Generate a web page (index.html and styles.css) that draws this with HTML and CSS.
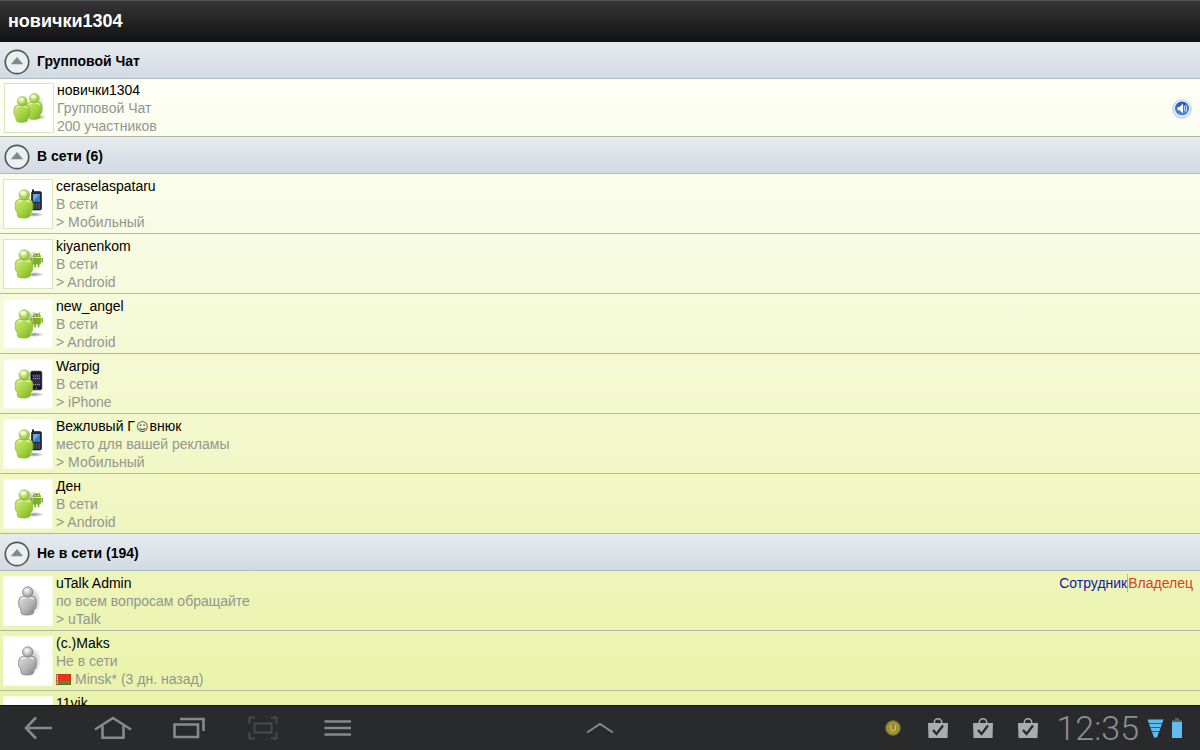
FILE: index.html
```html
<!DOCTYPE html>
<html lang="ru">
<head>
<meta charset="utf-8">
<title>новички1304</title>
<link rel="stylesheet" href="styles.css">
</head>
<body>
<svg class="defs" aria-hidden="true">
  <defs>
    <linearGradient id="green" x1="0" y1="0" x2="1" y2="1"><stop offset="0" stop-color="#d0ec7e"/><stop offset=".5" stop-color="#a9d545"/><stop offset="1" stop-color="#76ad1c"/></linearGradient>
    <radialGradient id="greenHead" cx=".4" cy=".35" r=".7"><stop offset="0" stop-color="#eafabf"/><stop offset=".5" stop-color="#b5dc5c"/><stop offset="1" stop-color="#7fb526"/></radialGradient>
    <linearGradient id="grey" x1="0" y1="0" x2="1" y2="1"><stop offset="0" stop-color="#dedede"/><stop offset=".55" stop-color="#b5b5b5"/><stop offset="1" stop-color="#7a7a7a"/></linearGradient>
    <radialGradient id="greyHead" cx=".4" cy=".35" r=".7"><stop offset="0" stop-color="#ffffff"/><stop offset=".5" stop-color="#c6c6c6"/><stop offset="1" stop-color="#858585"/></radialGradient>
    <radialGradient id="shade"><stop offset="0" stop-color="#000" stop-opacity=".45"/><stop offset="1" stop-color="#000" stop-opacity="0"/></radialGradient>
    <linearGradient id="blue" x1="0" y1="0" x2="0" y2="1"><stop offset="0" stop-color="#2a56b4"/><stop offset="1" stop-color="#4b8ae0"/></linearGradient>
  </defs>
  <symbol id="person" viewBox="0 0 18 28">
    <path d="M4.500 9.500Q1 10 .6 14L.7 19Q.9 20.500 2.300 20.700L3 25.500Q3.400 26.700 5 27Q9 27.800 13 26.800Q14.700 26.300 14.900 24.500L15.200 22Q17 21.500 17.200 19.500L17.400 15Q17.300 10.500 14.500 9.700Q9.500 8.400 4.500 9.500Z" fill="url(#green)" stroke="#86ba33" stroke-width=".7"/>
    <path d="M3 12Q9 9 15 12" fill="none" stroke="#e6f7b6" stroke-width="1.200"/>
    <circle cx="9.300" cy="5.500" r="5.100" fill="url(#greenHead)" stroke="#8fc03c" stroke-width=".5"/>
    <ellipse cx="8.300" cy="3.500" rx="2.900" ry="1.700" fill="#fff" opacity=".65"/>
  </symbol>
  <symbol id="person-off" viewBox="0 0 18 28">
    <path d="M4.500 9.500Q1 10 .6 14L.7 19Q.9 20.500 2.300 20.700L3 25.500Q3.400 26.700 5 27Q9 27.800 13 26.800Q14.700 26.300 14.900 24.500L15.200 22Q17 21.500 17.200 19.500L17.400 15Q17.300 10.500 14.500 9.700Q9.500 8.400 4.500 9.500Z" fill="url(#grey)" stroke="#8b8b8b" stroke-width=".8"/>
    <path d="M3 12Q9 9 15 12" fill="none" stroke="#f4f4f4" stroke-width="1.200"/>
    <circle cx="9.300" cy="5.500" r="5" fill="url(#greyHead)" stroke="#8b8b8b" stroke-width=".8"/>
  </symbol>
  <symbol id="contact-mobile" viewBox="0 0 48 48">
    <ellipse cx="30" cy="34.500" rx="10" ry="2.500" fill="url(#shade)"/>
    <rect x="28" y="9.500" width="2" height="5" fill="#222"/>
    <rect x="27.500" y="11.500" width="10" height="18.500" rx="1.600" fill="#252a31" stroke="#111" stroke-width=".6"/>
    <rect x="29" y="14" width="7" height="7.500" fill="#6ba8e8"/><path d="M29 21.500L36 14V21.500Z" fill="#3e79c4"/>
    <path d="M29 24H36M29 26H36M29 28H36" stroke="#8491a0" stroke-width=".8" stroke-dasharray="1.600 1"/>
    <use href="#person" x="10.500" y="9" width="19" height="30"/>
  </symbol>
  <symbol id="contact-android" viewBox="0 0 48 48">
    <ellipse cx="30" cy="34.500" rx="10" ry="2.500" fill="url(#shade)"/><ellipse cx="27" cy="19" rx="5" ry="9" fill="url(#shade)" opacity=".6"/>
    <g fill="#80ad2b"><path d="M28.700 17A4.100 3.700 0 0 1 36.900 17ZM28.700 17.700H36.900V23.600Q36.900 24.500 36 24.500H29.600Q28.700 24.500 28.700 23.600Z"/><rect x="26.700" y="17.600" width="1.500" height="5.200" rx=".7"/><rect x="37.400" y="17.600" width="1.500" height="5.200" rx=".7"/><rect x="30.200" y="24" width="1.700" height="3.500" rx=".7"/><rect x="33.700" y="24" width="1.700" height="3.500" rx=".7"/></g>
    <path d="M30.500 14L29.500 12M35.100 14L36.100 12" stroke="#80ad2b" stroke-width=".7"/><circle cx="31.200" cy="15.500" r=".5" fill="#fff"/><circle cx="34.500" cy="15.500" r=".5" fill="#fff"/>
    <use href="#person" x="10.500" y="9" width="19" height="30"/>
  </symbol>
  <symbol id="contact-iphone" viewBox="0 0 48 48">
    <ellipse cx="30" cy="34.500" rx="10" ry="2.500" fill="url(#shade)"/>
    <rect x="26.500" y="11" width="11.500" height="19" rx="1.800" fill="#15151a" stroke="#777" stroke-width=".7"/>
    <rect x="28.200" y="14" width="8.200" height="12.500" fill="#322e48"/>
    <path d="M29 16H36M29 18.500H36M29 24.500H36" stroke="#9a98bd" stroke-width="1" stroke-dasharray="1.200 .8"/><circle cx="32.300" cy="28.300" r=".9" fill="#777"/>
    <use href="#person" x="10.500" y="9" width="19" height="30"/>
  </symbol>
  <symbol id="contact-group" viewBox="0 0 48 48">
    <ellipse cx="32" cy="33" rx="9" ry="3" fill="url(#shade)"/><ellipse cx="34" cy="22" rx="6" ry="11" fill="url(#shade)" opacity=".5"/>
    <use href="#person" x="20" y="9" width="18" height="27"/>
    <use href="#person" x="8" y="12" width="18" height="27"/>
  </symbol>
  <symbol id="contact-off" viewBox="0 0 48 48">
    <ellipse cx="30" cy="24" rx="7" ry="13" fill="url(#shade)" opacity=".7"/>
    <use href="#person-off" x="14" y="9" width="19" height="30"/>
  </symbol>
  <symbol id="collapse" viewBox="0 0 26 26">
    <circle cx="13" cy="13" r="11.700" fill="#edf0f3" stroke="#55595d" stroke-width="1.700"/>
    <path d="M13 8L19.200 15.300H6.800Z" fill="#85898c"/>
  </symbol>
  <symbol id="bag" viewBox="0 0 20 20">
    <path d="M6.300 5V4.500A3.700 3.700 0 0 1 13.700 4.500V5" fill="none" stroke="#a9abad" stroke-width="1.500"/>
    <path d="M0 5H20L19.500 20H.5Z" fill="#a9abad"/>
    <path d="M5 12L8.500 16L15 7.500" fill="none" stroke="#292a2c" stroke-width="2.300"/>
  </symbol>
</svg>

<header class="titlebar"><h1 class="title">новички1304</h1></header>

<main class="roster">
  <section>
    <h2 class="group"><button class="group-toggle" type="button"><svg class="toggle-icon"><use href="#collapse"/></svg>Групповой Чат</button></h2>
    <ul class="contacts">
      <li class="contact contact-room">
        <svg class="avatar avatar-framed"><use href="#contact-group"/></svg>
        <div class="info"><span class="name">новички1304</span><span>Групповой Чат</span><span>200 участников</span></div>
        <button class="sound" type="button" aria-label="Звук">
          <svg viewBox="0 0 20 20"><circle cx="10" cy="10" r="9.300" fill="#d3dde3" stroke="#bdcbd0" stroke-width=".8"/><circle cx="10" cy="9.500" r="8" fill="#f0f6fb"/><circle cx="10" cy="9.500" r="7" fill="url(#blue)"/><path d="M5.500 8H7.500L11 4.800V14.200L7.500 11.200H5.500Z" fill="#fff"/><path d="M12.200 7Q13.500 9.500 12.200 12M13.800 5.800Q15.700 9.500 13.800 13.200" fill="none" stroke="#dceaff" stroke-width="1"/></svg>
        </button>
      </li>
    </ul>
  </section>
  <section>
    <h2 class="group"><button class="group-toggle" type="button"><svg class="toggle-icon"><use href="#collapse"/></svg>В сети (6)</button></h2>
    <ul class="contacts">
      <li class="contact"><svg class="avatar avatar-framed"><use href="#contact-mobile"/></svg><div class="info"><span class="name">ceraselaspataru</span><span>В сети</span><span>&gt; Мобильный</span></div></li>
      <li class="contact"><svg class="avatar avatar-framed"><use href="#contact-android"/></svg><div class="info"><span class="name">kiyanenkom</span><span>В сети</span><span>&gt; Android</span></div></li>
      <li class="contact"><svg class="avatar"><use href="#contact-android"/></svg><div class="info"><span class="name">new_angel</span><span>В сети</span><span>&gt; Android</span></div></li>
      <li class="contact"><svg class="avatar"><use href="#contact-iphone"/></svg><div class="info"><span class="name">Warpig</span><span>В сети</span><span>&gt; iPhone</span></div></li>
      <li class="contact"><svg class="avatar"><use href="#contact-mobile"/></svg><div class="info"><span class="name">Вежлυвый Г<span class="smile">☺</span>внюк</span><span>место для вашей рекламы</span><span>&gt; Мобильный</span></div></li>
      <li class="contact"><svg class="avatar"><use href="#contact-android"/></svg><div class="info"><span class="name">Ден</span><span>В сети</span><span>&gt; Android</span></div></li>
    </ul>
  </section>
  <section>
    <h2 class="group"><button class="group-toggle" type="button"><svg class="toggle-icon"><use href="#collapse"/></svg>Не в сети (194)</button></h2>
    <ul class="contacts">
      <li class="contact"><svg class="avatar"><use href="#contact-off"/></svg><div class="info"><span class="name">uTalk Admin</span><span>по всем вопросам обращайте</span><span>&gt; uTalk</span></div><div class="roles"><span class="role-staff">Сотрудник</span><span class="role-owner">Владелец</span></div></li>
      <li class="contact"><svg class="avatar"><use href="#contact-off"/></svg><div class="info"><span class="name">(c.)Maks</span><span>Не в сети</span><span class="place"><svg class="flag" viewBox="0 0 15 11"><rect width="15" height="11" fill="#f0321c"/><rect y="7" width="15" height="4" fill="#3c9a28"/><rect width="2" height="11" fill="#f7d5cc"/><path d="M1 0V11" stroke="#d23424" stroke-width="1.200" stroke-dasharray="1 1"/><rect x=".5" y=".5" width="14" height="10" fill="none" stroke="#8d3a22" stroke-opacity=".5"/></svg>Minsk* (3 дн. назад)</span></div></li>
      <li class="contact"><svg class="avatar"><use href="#contact-off"/></svg><div class="info"><span class="name">11vik</span></div></li>
    </ul>
  </section>
</main>

<footer class="systembar">
  <nav class="nav">
    <button class="nav-button" type="button" aria-label="Назад"><svg viewBox="0 0 40 30"><path d="M34 15H9M18 4.500L8 15L18 25.500" fill="none" stroke="#88898a" stroke-width="2.600"/></svg></button>
    <button class="nav-button" type="button" aria-label="Домой"><svg viewBox="0 0 40 30"><path d="M2 16.500L20 5L38 16.500M9.500 13V24.700H30.500V13" fill="none" stroke="#88898a" stroke-width="2.600"/></svg></button>
    <button class="nav-button" type="button" aria-label="Недавние"><svg viewBox="0 0 40 30"><path d="M6.500 11.500H30V24H6.500ZM12 6H35.500V18" fill="none" stroke="#88898a" stroke-width="2.600"/></svg></button>
    <button class="nav-button" type="button" aria-label="Снимок"><svg viewBox="0 0 40 30"><path d="M12 4.500H6.500V11M28 4.500H33.500V11M12 25.500H6.500V19M28 25.500H33.500V19M11.500 10.500H28.500V19.500H11.500Z" fill="none" stroke="#48494b" stroke-width="2"/></svg></button>
    <button class="nav-button" type="button" aria-label="Меню"><svg viewBox="0 0 40 30"><path d="M6.500 8.500H33M6.500 15H33M6.500 21.500H33" stroke="#88898a" stroke-width="2.600"/></svg></button>
  </nav>
  <button class="drawer" type="button" aria-label="Развернуть"><svg viewBox="0 0 28 12"><path d="M1 10.500L14 2L27 10.500" fill="none" stroke="#858687" stroke-width="2"/></svg></button>
  <div class="status">
    <svg class="coin" viewBox="0 0 16 16"><circle cx="8" cy="8" r="7.300" fill="#958626" stroke="#777034" stroke-width="1"/><circle cx="8" cy="8" r="5.300" fill="none" stroke="#b8ab4d" stroke-width=".8"/><path d="M5.800 4.800V8.500A2.300 2.300 0 0 0 10.400 8.500V4.800" fill="none" stroke="#c7bd6c" stroke-width="1.400"/></svg>
    <svg class="bag"><use href="#bag"/></svg>
    <svg class="bag"><use href="#bag"/></svg>
    <svg class="bag"><use href="#bag"/></svg>
    <div class="clock">
      <time>12:35</time>
      <svg class="signal" viewBox="0 0 17 19"><path d="M.5.500H16.500L10 18.500H7Z" fill="#5fbdf0"/><path d="M2 4.500H15M3.500 8.500H13.500M5 12.500H12" stroke="#2d5f7c" stroke-width="1"/></svg>
      <svg class="battery" viewBox="0 0 10 20"><rect x="3" width="4" height="3" fill="#5a5b5d"/><rect y="2" width="10" height="4" fill="#5a5b5d"/><rect y="4" width="10" height="16" fill="#5fbdf0"/></svg>
    </div>
  </div>
</footer>
</body>
</html>
```

FILE: styles.css
```css
* { box-sizing: border-box; }

body {
  margin: 0;
  height: 100vh;
  display: flex;
  flex-direction: column;
  overflow: hidden;
  font-family: "Liberation Sans", Arial, sans-serif;
  font-size: 14px;
  line-height: 18px;
  color: #000;
}

button {
  border: 0;
  padding: 0;
  background: none;
  font: inherit;
  color: inherit;
}

svg { display: block; }

.defs {
  position: absolute;
  width: 0;
  height: 0;
}

.titlebar {
  flex: none;
  display: flex;
  align-items: center;
  height: 42px;
  padding: 0 8px 2px;
  background: linear-gradient(#353535, #121212);
  border-top: 1px solid #555;
}

.title {
  margin: 0;
  font-size: 18px;
  line-height: 24px;
  color: #fff;
}

.roster {
  flex: 1;
  min-height: 0;
  overflow: hidden;
  background: linear-gradient(#fefffb, #e9f3a9);
}

.group {
  margin: 0;
  font-size: 14px;
}

.group-toggle {
  display: flex;
  align-items: center;
  gap: 7px;
  width: 100%;
  height: 37px;
  padding: 2px 4px 0;
  background: linear-gradient(#e6ebef, #d3dae2);
  border-bottom: 1px solid #aebbc2;
  text-align: left;
}

.toggle-icon {
  width: 26px;
  height: 26px;
  margin-top: 2px;
}

.contacts {
  margin: 0;
  padding: 0;
  list-style: none;
}

.contact {
  display: flex;
  gap: 3px;
  height: 60px;
  padding: 3px 7px 0 3px;
  border-bottom: 1px solid #b2b8a4;
}

.contact-room {
  height: 58px;
  padding: 2px 8px 0 4px;
}

.avatar {
  flex: none;
  width: 50px;
  height: 50px;
  margin-top: 2px;
  background: #fff;
  border: 1px solid #f8fbe4;
}

.avatar-framed { border-color: #dbe5bd; }

.info {
  flex: 1;
  display: flex;
  flex-direction: column;
  color: #929690;
}

.name { color: #000; }

.smile {
  padding: 0 1px;
  font-family: "DejaVu Sans", sans-serif;
  font-size: 12px;
  line-height: 1;
  color: #444;
}

.place {
  display: flex;
  align-items: center;
  gap: 4px;
}

.flag {
  width: 15px;
  height: 11px;
}

.sound {
  align-self: center;
  width: 20px;
  height: 20px;
}

.roles { display: flex; align-items: flex-start; }
.role-staff { color: #1515a8; border-right: 1px solid #b4b9a0; }
.role-owner { color: #dc401c; }

.systembar {
  flex: none;
  display: grid;
  grid-template-columns: 1fr auto 1fr;
  align-items: center;
  height: 45px;
  background: #292a2c;
  border-top: 1px solid #101309;
}

.nav {
  display: flex;
  gap: 35px;
  padding-left: 18px;
}

.nav-button { width: 40px; height: 30px; }
.nav-button svg { width: 40px; height: 30px; }

.drawer { width: 28px; height: 12px; }

.status {
  display: flex;
  justify-content: flex-end;
  align-items: center;
  gap: 25px;
  padding-right: 18px;
}

.coin {
  width: 16px;
  height: 16px;
  margin-right: 2px;
}

.bag { width: 20px; height: 20px; }

.clock {
  display: flex;
  align-items: center;
  gap: 8px;
  margin-left: -7px;
  font-family: Roboto, sans-serif;
  font-size: 34px;
  font-weight: 300;
  line-height: 40px;
  color: #8d8e90;
}

.signal { width: 17px; height: 19px; }
.battery { width: 10px; height: 20px; }
```
